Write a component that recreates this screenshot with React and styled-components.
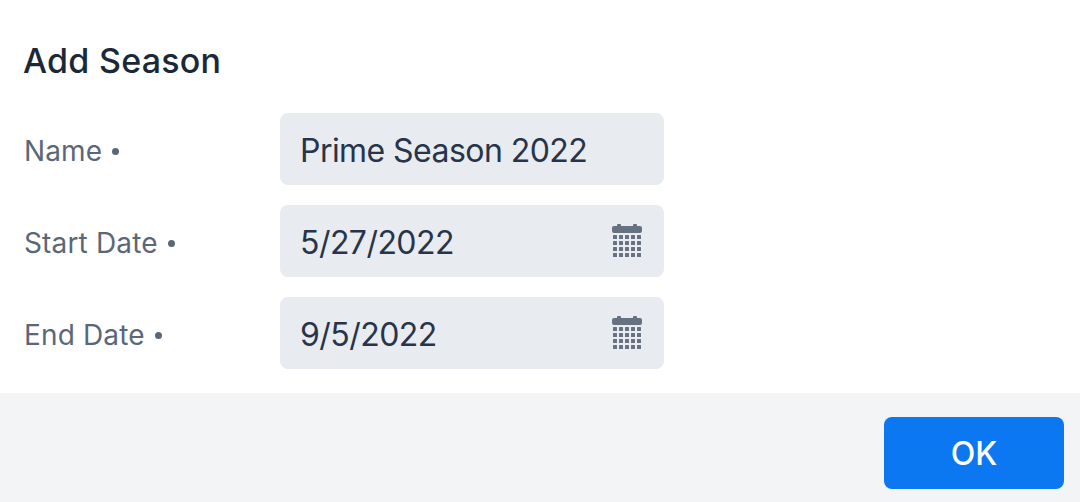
import styled, { createGlobalStyle } from "styled-components";

const GlobalStyle = createGlobalStyle`
  html, body {
    margin: 0;
    padding: 0;
    background: #ffffff;
    font-family: Inter, "Liberation Sans", sans-serif;
  }
`;

const Dialog = styled.div`
  width: 1080px;
  height: 502px;
  display: flex;
  flex-direction: column;
  background: #ffffff;
`;

const Body = styled.div`
  flex: 1;
  padding: 41px 24px 0;
`;

const Title = styled.h1`
  margin: 0 0 32px -1px;
  font-size: 34px;
  line-height: 40px;
  font-weight: 500;
  letter-spacing: 0.25px;
  color: #1a2838;
`;

const Form = styled.div`
  display: flex;
  flex-direction: column;
  gap: 20px;
`;

const Row = styled.div`
  display: flex;
  align-items: center;
`;

const Label = styled.label`
  width: 256px;
  padding-top: 4px;
  font-size: 28px;
  letter-spacing: 0.15px;
  color: #5a6779;
  display: flex;
  align-items: center;
`;

const Dot = styled.span`
  width: 7px;
  height: 7px;
  margin-left: 10px;
  border-radius: 50%;
  background: #5a6779;
`;

const Field = styled.div`
  width: 384px;
  height: 72px;
  padding: 2px 20px 0;
  box-sizing: border-box;
  display: flex;
  align-items: center;
  justify-content: space-between;
  background: #e8ebf0;
  border-radius: 8px;
  font-size: 32px;
  letter-spacing: -0.55px;
  color: #27344a;
`;

const FieldIcon = styled.svg`
  margin: -2px 1px 0 0;
  fill: #667181;
`;

const Footer = styled.div`
  height: 109px;
  padding: 24px 16px 0;
  box-sizing: border-box;
  display: flex;
  justify-content: flex-end;
  align-items: flex-start;
  background: #f3f4f6;
`;

const OkButton = styled.button`
  width: 180px;
  height: 72px;
  border: 0;
  border-radius: 8px;
  background: #0b78f2;
  color: #ffffff;
  font-family: inherit;
  font-size: 32px;
  font-weight: 500;
`;

const CalendarIcon = () => (
  <FieldIcon width="32" height="34" viewBox="0 0 32 34">
    <rect x="6" y="0" width="4" height="4" rx="1" />
    <rect x="22" y="0" width="4" height="4" rx="1" />
    <rect x="1" y="2" width="30" height="7" rx="2" />
    {[11, 17, 23, 29].map((y) =>
      [2, 8, 14, 20, 26].map((x) => (
        <rect key={`${x}-${y}`} x={x} y={y} width="4" height="4" rx="0.5" />
      ))
    )}
  </FieldIcon>
);

const App = () => {
  return (
    <Dialog>
      <GlobalStyle />
      <Body>
        <Title>Add Season</Title>
        <Form>
          <Row>
            <Label>
              Name<Dot />
            </Label>
            <Field>Prime Season 2022</Field>
          </Row>
          <Row>
            <Label>
              Start Date<Dot />
            </Label>
            <Field>
              5/27/2022
              <CalendarIcon />
            </Field>
          </Row>
          <Row>
            <Label>
              End Date<Dot />
            </Label>
            <Field>
              9/5/2022
              <CalendarIcon />
            </Field>
          </Row>
        </Form>
      </Body>
      <Footer>
        <OkButton>OK</OkButton>
      </Footer>
    </Dialog>
  );
};

export default App;
